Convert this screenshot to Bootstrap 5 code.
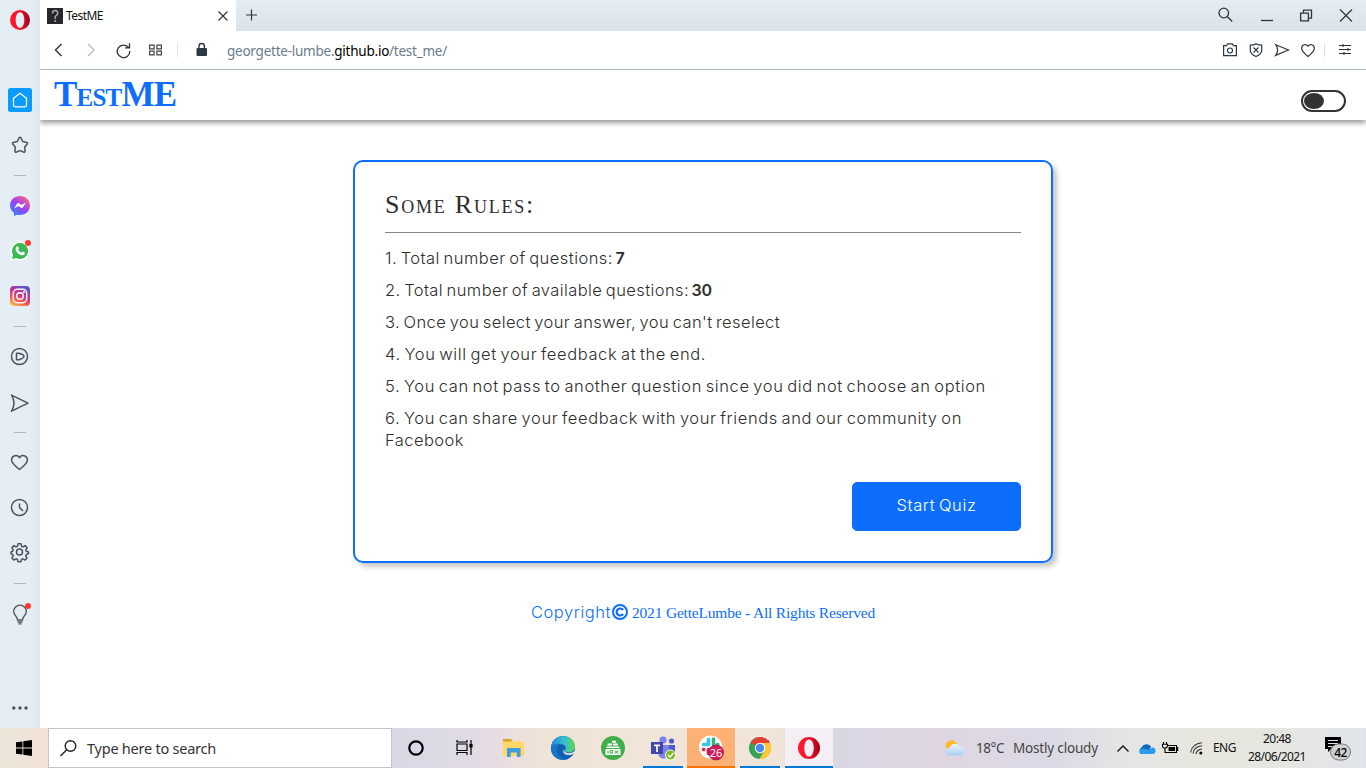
<!DOCTYPE html>
<html lang="en">
<head>
<meta charset="utf-8">
<title>TestME</title>
<link href="https://cdn.jsdelivr.net/npm/bootstrap@5.3.0/dist/css/bootstrap.min.css" rel="stylesheet">
<style>
body{width:1366px;height:768px;overflow:hidden;background:#fff;color:#2d2d2d;font-family:Inter,sans-serif;font-size:16px}
svg{display:block;fill:none;overflow:visible}
.t{display:inline-block;white-space:nowrap}
.side{width:40px;position:relative;z-index:2;background:linear-gradient(90deg,#e5edf5 75%,#dde6ee);color:#4a5560}
.side .it{height:45px;position:relative}
.side hr{width:12px;margin:7.5px auto;border-top:1px solid #a5b8c7;opacity:1}
.logo-cell{height:77.5px;padding-top:10px}
.reddot{position:absolute;left:25px;top:11px;width:6px;height:6px;border-radius:50%;background:#ff3b30}
.tabs-row{height:31px;background:linear-gradient(#e6eef5,#d9e1e9)}
.tab-on{width:196px;padding-left:7px;background:#fff;font:12px "Noto Sans",sans-serif;letter-spacing:-.54px;color:#111}
.addr{height:39px;border-bottom:1px solid #b4bec8;font:13.5px "Noto Sans",sans-serif;letter-spacing:-.24px;color:#6b7c8c}
.url{margin:2px 0 0 20px}
.site-head{height:50px;box-shadow:0 3px 5px rgba(0,0,0,.4);padding:0 20px 0 14px}
.brandname{font:bold 35px/50px "Liberation Serif",serif;font-variant:small-caps;letter-spacing:-.78px;color:#0d6efd}
.switchy{width:45px;height:22px;border:2px solid #333;border-radius:11px;padding:1px;margin-top:12px}
.switchy i{display:block;width:20px;height:16px;border-radius:50%;background:#333}
.rules{width:700px;height:403px;margin:40px 0 0 313px;border:2px solid #0d6efd;border-radius:10px;padding:25px 30px 30px;box-shadow:4px 4px 5px rgba(0,0,0,.22)}
.rules h1{font:26px/36px "Liberation Serif",serif;font-variant:small-caps;letter-spacing:1.77px;margin:0;height:46px;border-bottom:1px solid #888}
.rules ol,.startbtn,.copyr .cp{font-size:16.5px;word-spacing:-1.5px;font-weight:300}
.rules ol{list-style:none;margin:14px 0 0;padding:0;line-height:22px}
.rules li{margin-bottom:10px}
.rules li:nth-child(1){letter-spacing:.464px}
.rules li:nth-child(2){letter-spacing:.403px}
.rules li:nth-child(3){letter-spacing:.394px}
.rules li:nth-child(4){letter-spacing:.61px}
.rules li:nth-child(5){letter-spacing:.609px}
.rules li:nth-child(6){letter-spacing:.593px}
.rules li .last{letter-spacing:.45px}
.rules b{font-weight:600;font-size:16px;letter-spacing:-.3px;margin-left:2.5px}
.startbtn{width:169px;height:49px;border-radius:5px;letter-spacing:.62px;margin-top:21px;padding:4px 0 6px}
.copyr{margin:37px 0 0 491px;color:#0d6efd;line-height:24px}
.copyr .cp{letter-spacing:.54px}
.copyr .sf{font:15.5px/26px "Liberation Serif",serif;letter-spacing:-.193px}
.copyr svg{margin:4px 4px 0 1px}
.taskbar{height:40px;background:linear-gradient(90deg,#ece5d9 0,#f3e2d6 48px,#dad8e6 392px,#dedae6 460px,#e8dbe3 490px,#f0e3d8 540px,#f1e4d8 780px,#d9d6e4 840px,#dfd5e2 930px,#dcd9e6 1050px,#e5e5e4 1130px,#e7e7de 1210px,#e6e6e2 1290px,#dfe4ea 1366px);color:#111;font-family:"Noto Sans",sans-serif}
.find{width:344px;border:1px solid #c5c5c9;background:#fff;font-size:14.5px;letter-spacing:-.236px;color:#333}
.app{width:50px;border-bottom:2px solid transparent;padding-top:1px}
.app.sm{width:48px}
.app.tm{width:49px}
.app.run{background:linear-gradient(#0078d7,#0078d7) center bottom/40px 2px no-repeat border-box}
.app.sl{background:#fdb174;border-bottom-color:#f77400}
.app.op{background:#f3eff4;border-bottom-color:#0078d7}
.tray{width:421px;font-size:12px;letter-spacing:-.51px}
.weather{font-size:13.5px;color:#444;gap:9px;margin-left:11px;letter-spacing:-.18px}
.weather .deg{letter-spacing:-.44px}
.clock{margin:-1px 0 0 11px;line-height:18px;width:60px;letter-spacing:-.6px}
</style>
</head>
<body class="d-flex flex-column">
<div class="d-flex flex-grow-1">
<nav class="side d-flex flex-column flex-shrink-0">
  <div class="logo-cell d-flex justify-content-center"><svg width="20" height="20" viewBox="0 0 20 20"><defs><linearGradient id="og"><stop offset="0" stop-color="#ff1b2d"/><stop offset=".5" stop-color="#f0142b"/><stop offset="1" stop-color="#a00016"/></linearGradient></defs><path fill="url(#og)" fill-rule="evenodd" d="M10 0a10 10 0 100 20a10 10 0 100-20M10 2.200c2.700 0 4.300 3.500 4.300 7.800s-1.600 7.800-4.300 7.800s-4.300-3.500-4.300-7.800s1.600-7.800 4.300-7.800"/></svg></div>
  <div class="it d-flex align-items-center justify-content-center"><svg width="24" height="24"><rect width="24" height="24" rx="2.500" fill="#0a9bff"/><path stroke="#fff" stroke-width="1.300" stroke-linejoin="round" d="M12 5.200l6.500 5v6.600q0 2-2 2h-9q-2 0-2-2v-6.600z"/></svg></div>
  <div class="it d-flex align-items-center justify-content-center"><svg width="18" height="18" stroke="currentColor" stroke-width="1.500" stroke-linejoin="round"><path d="M8 2q1-1.500 2 0l1.700 3.500 4 .9q1.400.6.400 1.900l-2.400 2.800.4 4q-.2 1.400-1.600.9L9 14.600 5.500 16q-1.400.5-1.600-.9l.4-4L1.900 8.300q-1-1.300.4-1.900l4-.9z"/></svg></div>
  <hr>
  <div class="it d-flex align-items-center justify-content-center"><svg width="20" height="20"><defs><linearGradient id="mg" x1=".1" y1="1" x2=".9" y2="0"><stop offset="0" stop-color="#1595ff"/><stop offset=".5" stop-color="#a040f5"/><stop offset="1" stop-color="#ff6d70"/></linearGradient></defs><path fill="url(#mg)" d="M10 0c5.600 0 10 4.200 10 9.600s-4.400 9.500-10 9.500q-1.500 0-2.800-.4L4 20v-3Q0 14 0 9.600C0 4.200 4.400 0 10 0"/><path fill="#fff" d="M4 12.400l3.200-4.900q.8-1 1.900-.3l2.300 1.700 4.600-2.400-3.200 5q-.8 1-1.900.2l-2.300-1.700z"/></svg></div>
  <div class="it d-flex align-items-center justify-content-center"><svg width="20" height="20"><path fill="#fff" d="M0 20L1.500 14.500A9.500 9.500 0 1 1 5.500 18.500z"/><path fill="#3cb950" d="M2 18l1.100-4A8 8 0 1 1 6.200 17z"/><path fill="#fff" d="M6.700 5.500q1-.8 1.500.2l.7 1.600q.1.600-.8 1.500 1.200 2.200 3.300 3 1-1.400 1.500-1.200l1.700.9q.6.300 0 1.500-.8 1.500-2.800 1.200c-3.500-.7-6-3.700-6.200-6q0-1.700 1.100-2.700"/></svg><span class="reddot"></span></div>
  <div class="it d-flex align-items-center justify-content-center"><svg width="20" height="20"><defs><linearGradient id="ig" x1=".1" y1="1" x2=".6" y2="0"><stop offset="0" stop-color="#fdc855"/><stop offset=".35" stop-color="#f25b4d"/><stop offset=".65" stop-color="#d02c92"/><stop offset="1" stop-color="#5955d0"/></linearGradient></defs><rect width="20" height="20" rx="4" fill="url(#ig)"/><g stroke="#fff" stroke-width="1.500"><rect x="3.300" y="3.300" width="13.400" height="13.400" rx="4"/><circle cx="10" cy="10" r="3.300"/></g><circle cx="14" cy="6" r="1" fill="#fff"/></svg></div>
  <hr>
  <div class="it d-flex align-items-center justify-content-center"><svg width="18" height="18" stroke="currentColor" stroke-width="1.500" stroke-linejoin="round"><circle cx="8.500" cy="8.500" r="8"/><path d="M5.500 5.300h2.500q5 1.500 5 3.200t-5 3.200H5.500z"/></svg></div>
  <div class="it d-flex align-items-center justify-content-center pt-1"><svg width="18" height="18" stroke="currentColor" stroke-width="1.500" stroke-linejoin="round"><path d="M.5.200l16.500 8-16.500 8q5-8 0-16z"/></svg></div>
  <hr>
  <div class="it d-flex align-items-center justify-content-center"><svg width="18" height="18" stroke="currentColor" stroke-width="1.500"><path d="M8.500 15.500Q.5 9.300.5 5.700A4.400 4.400 0 0 1 8.500 3.500 4.400 4.400 0 0 1 16.500 5.700Q16.500 9.300 8.500 15.500z"/></svg></div>
  <div class="it d-flex align-items-center justify-content-center"><svg width="18" height="18" stroke="currentColor" stroke-width="1.500"><circle cx="8.500" cy="8.500" r="8"/><path d="M8.500 4.500v4l3.500 3.500"/></svg></div>
  <div class="it d-flex align-items-center justify-content-center"><svg width="18" height="18" viewBox="0.500 1 18 18" stroke="currentColor" stroke-width="1.500" stroke-linejoin="round"><circle cx="9" cy="9" r="3"/><path d="M7.500.8h3l.5 2.400 1.500.7 2.200-1.300 1.900 2.200-1.300 2 .5 1.500 2.200.7v1.800l-2.200.6-.6 1.500 1.300 2.100-2 2.100-2.100-1.300-1.400.6-.5 2.300h-3L7 16.400l-1.500-.6-2.100 1.300-2-2.100 1.300-2.100-.6-1.500-1.600-.6V9l1.600-.7.600-1.500-1.300-2 2-2.200 2.100 1.300L7 3.200z"/></svg></div>
  <hr>
  <div class="it d-flex align-items-center justify-content-center pt-1"><svg width="16" height="20" stroke="currentColor" stroke-width="1.300"><path d="M5.500 14q0-2-2-4.200a6.300 6.300 0 1 1 9 0q-2 2.200-2 4.200zM5.500 16h5M6.500 17.800h3"/></svg><span class="reddot"></span></div>
  <div class="mt-auto d-flex justify-content-center pb-3"><svg width="16" height="8"><circle cx="1.800" cy="4" r="1.700" fill="#4a5560"/><circle cx="8" cy="4" r="1.700" fill="#4a5560"/><circle cx="14" cy="4" r="1.700" fill="#4a5560"/></svg></div>
</nav>
<main class="flex-grow-1">
  <div class="tabs-row d-flex">
    <div class="tab-on d-flex align-items-center"><svg width="16" height="16"><rect width="16" height="16" fill="#26282c"/><path stroke="#aaa" stroke-width="1.500" d="M5.500 5.500q0-3 2.700-3t2.500 2.700q0 1.500-2.500 3.300v2.500"/><circle cx="8.200" cy="13" r="1" fill="#aaa"/></svg><span class="t" style="margin-left:3px">TestME</span><svg class="ms-auto me-2" width="10" height="10" stroke="#333" stroke-width="1.200"><path d="M.5.500l9 9M9.500.500l-9 9"/></svg></div>
    <svg class="align-self-center ms-2 ps-1" width="15" height="11" stroke="#333" stroke-width="1.200"><path d="M3.500-.5v11M-2 5h11"/></svg>
    <div class="ms-auto d-flex align-items-center" style="padding-right:14px;gap:28px">
      <svg width="15" height="15" stroke="#333" stroke-width="1.300"><circle cx="5.800" cy="5" r="4.800"/><path d="M9.200 8.500l5 5"/></svg>
      <svg width="11" height="12" stroke="#333" stroke-width="1.300"><path d="M0 10.500h12"/></svg>
      <svg width="12" height="12" stroke="#333" stroke-width="1.300"><path d="M.6 3.100h7.800v7.800H.6zM3.500 3V.1h8v8h-3"/></svg>
      <svg width="12" height="12" stroke="#333" stroke-width="1.200"><path d="M0-.5l12 12M12-.5L0 11.500"/></svg>
    </div>
  </div>
  <div class="addr d-flex align-items-center">
    <svg width="70" height="16" style="margin-left:14px" stroke-width="1.400"><path stroke="#333" d="M7.500 2l-6 6 6 6"/><path stroke="#bbb" d="M34 2l6 6-6 6"/></svg>
    <svg style="margin-left:-8px" width="14" height="14" stroke="#333" stroke-width="1.300"><path d="M12.500 4.500A6.300 6.300 0 1 0 13.800 8M13.500.3v4.500H9"/></svg>
    <svg style="margin-left:19px" width="13" height="11" stroke="#444" stroke-width="1.200"><path d="M.6.100h4.500v3.700H.6zM7.900.1h4.500v3.700H7.900zM.6 6.200h4.500v3.700H.6zM7.900 6.200h4.500v3.700H7.900z"/></svg>
    <span class="border-start" style="height:14px;margin-left:15px"></span>
    <svg style="margin-left:18px" width="11" height="14"><rect x=".5" y="5" width="10.500" height="8" rx="1" fill="#2c3944"/><path d="M3 6V3.200a2.700 2.700 0 0 1 5.400 0V6" stroke="#2c3944" stroke-width="1.400"/></svg>
    <span class="t url">georgette-lumbe.<span class="text-black">github.io</span>/test_me/</span>
    <div class="ms-auto d-flex align-items-center" style="padding-right:15px;gap:12px">
      <svg width="15" height="14" stroke="#2c3944" stroke-width="1.200"><path d="M.6 2.600h3l1-1.800h4.800l1 1.800h3v10H.6z"/><circle cx="7" cy="7.500" r="2.500"/></svg>
      <svg width="13" height="14" stroke="#2c3944" stroke-width="1.200"><path d="M6 .7q2.500 1.500 5.700 1.500v5.300q0 3.500-5.700 6-5.700-2.500-5.700-6V2.200Q4 2.200 6 .7zM3.500 4.500l5 5M8.500 4.500l-5 5"/></svg>
      <svg width="14" height="12" stroke="#2c3944" stroke-width="1.200"><path d="M.7.700L13.500 6 .7 11.300Q4.500 6 .7.700z"/></svg>
      <svg width="14" height="14" stroke="#2c3944" stroke-width="1.200"><path d="M7 13.500Q.6 8.500.6 5A3.500 3.500 0 0 1 7 3.200 3.500 3.500 0 0 1 13.400 5Q13.400 8.500 7 13.500z"/></svg>
      <span class="border-start" style="height:14px;margin:0 2px 0 -3px"></span>
      <svg width="12" height="12" stroke="#333" stroke-width="1.100"><path d="M0 1.500h12M0 5.500h12M0 9.500h12M4 0v3M9 4v3M5 8v3"/></svg>
    </div>
  </div>
  <header class="site-head d-flex align-items-center justify-content-between"><span class="brandname t">TestME</span><div class="switchy"><i></i></div></header>
  <section class="rules d-flex flex-column">
    <h1>Some Rules:</h1>
    <ol>
      <li><span class="t">1. Total number of questions:</span><b class="t">7</b></li>
      <li><span class="t">2. Total number of available questions:</span><b class="t">30</b></li>
      <li><span class="t">3. Once you select your answer, you can't reselect</span></li>
      <li><span class="t">4. You will get your feedback at the end.</span></li>
      <li><span class="t">5. You can not pass to another question since you did not choose an option</span></li>
      <li><span class="t">6. You can share your feedback with your friends and our community on</span><br><span class="t last">Facebook</span></li>
    </ol>
    <button class="btn btn-primary startbtn align-self-end">Start Quiz</button>
  </section>
  <footer class="copyr d-flex"><span class="t cp">Copyright</span><svg width="16" height="16" stroke="#0d6efd" stroke-width="2"><circle cx="8" cy="8" r="7"/><path stroke-width="2.200" d="M11 6a3.500 3.500 0 1 0 0 4"/></svg><span class="sf t">2021 GetteLumbe - All Rights Reserved</span></footer>
</main>
</div>
<div class="taskbar d-flex flex-shrink-0">
  <div class="d-flex align-items-center" style="width:48px;padding-left:16px"><svg width="16" height="16"><path fill="#000" d="M0 2.300l6.500-.9v6.200H0zM7.300 1.300L16 0v7.600H7.300zM0 8.400h6.500v6.200L0 13.700zM7.300 8.400H16V16l-8.700-1.300z"/></svg></div>
  <div class="find d-flex align-items-center"><svg style="margin-left:11px" width="17" height="17" stroke="#222" stroke-width="1.400"><circle cx="10.500" cy="6" r="5.300"/><path d="M6.500 10L.5 16"/></svg><span class="t" style="margin:1px 0 0 10px">Type here to search</span></div>
  <div class="app sm d-flex align-items-center justify-content-center"><svg width="16" height="16" stroke="#000" stroke-width="2.200"><circle cx="8" cy="8" r="6.700"/></svg></div>
  <div class="app sm d-flex align-items-center justify-content-center"><svg width="17" height="15" stroke="#000" stroke-width="1.200"><path d="M1 4h10v6.500H1zM1 0v2h10V0M1 15v-2.500h10V15M15 0v15"/><path fill="#000" d="M14 4.500h2v2.500h-2z"/></svg></div>
  <div class="app d-flex align-items-center justify-content-center"><svg width="21" height="18"><path fill="#d9a521" d="M0 0h8l2 3H0z"/><path fill="#ffd866" d="M0 2.500h21V17H0z"/><path fill="#3f9ce0" d="M4 9h13.500v9h-3.700v-4.500H7.700V18H4z"/></svg></div>
  <div class="app d-flex align-items-center justify-content-center"><svg width="24" height="24"><defs><linearGradient id="eg"><stop offset="0" stop-color="#2389d8"/><stop offset=".55" stop-color="#31bfd2"/><stop offset="1" stop-color="#62d650"/></linearGradient></defs><circle cx="12" cy="12" r="12" fill="#0f5fb4"/><path fill="url(#eg)" d="M.1 11C1 4 6 0 12 0c7 0 12 5 12 10.500 0 4-3 6-6.500 6-3 0-4-1.300-3.500-2.200 2-2.500.3-6.300-5-6.300C4.500 8 1 9 .1 11"/><path fill="#1677c9" d="M0 11.500C1 8.500 5 7 9 8c-3 2-4 5-2.500 9 1 3 4 5.500 8 6.600Q11 24.500 7 22.800C2.500 20.800-.3 17 0 11.500"/><path fill="#f1e4d8" d="M13.500 13c-.8 1.500 0 4.200 4 4.200q3.500 0 6.500-2.200v3l-1.300-.6q-2.200 1.600-5.200 1.600-4-.2-5.200-3Q12 14.200 13.500 13"/></svg></div>
  <div class="app d-flex align-items-center justify-content-center"><svg width="24" height="24"><circle cx="12" cy="12" r="12" fill="#3fae49"/><g fill="#fff"><path d="M6.500 7.500h4.500v2H6.500zM12 7.500h5v2h-5zM11 4.700h4v2h-4zM5.500 10.500h13V12h-13zM4.500 13h15v6h-15z"/></g><path stroke="#3fae49" d="M7 14.500v3M9 14.500h2.500v2.600H9zM13.500 14.500l4 3M17.500 14.500l-4 3"/></svg></div>
  <div class="app tm run d-flex align-items-center justify-content-center"><svg width="24" height="24"><circle cx="12" cy="4" r="3.600" fill="#7b83eb"/><circle cx="20.500" cy="5" r="2.600" fill="#5059c9"/><path fill="#5059c9" d="M16 9h8v7a4 4 0 0 1-8 1z"/><path fill="#7b83eb" d="M7 9h11v8a5.500 5.500 0 0 1-11 0z"/><path fill="#4048a8" d="M0 6h12v12H0z"/><path stroke="#fff" stroke-width="1.700" d="M3 9.300h6M6 9.300V16"/><circle cx="19.500" cy="19" r="5" fill="#76b81e" stroke="#fff"/><path stroke="#fff" stroke-width="1.600" d="M17 19l2 2 3.500-4"/></svg></div>
  <div class="app sm sl d-flex align-items-center justify-content-center"><svg width="26" height="26"><circle cx="12.500" cy="12" r="11.500" fill="#fff"/><g stroke-width="3.600" stroke-linecap="round"><path stroke="#36c5f0" d="M10.500 4.500v5M5.500 9.500h4"/><path stroke="#2eb67d" d="M15.500 4v6M19.500 9.500h.3"/><path stroke="#e01e5a" d="M5.500 14.500h.3M10.500 14.500v4"/></g><circle cx="18" cy="17.500" r="7.500" fill="#d51b5c" stroke="#8c1640" stroke-width=".8"/><text x="18" y="21.500" text-anchor="middle" fill="#fff" font-family="Noto Sans" font-size="11">26</text></svg></div>
  <div class="app run d-flex align-items-center justify-content-center"><svg width="22" height="22"><circle cx="11" cy="11" r="11" fill="#34a353"/><path fill="#e24133" d="M11 11L1.500 5.500a11 11 0 0 1 19 0z"/><path fill="#fdc93a" d="M11 11V5.800h9.800A11 11 0 0 1 10.500 22l5-8.500z"/><path fill="#e24133" d="M11 5.900V3h8.600l1.200 2.900z"/><circle cx="11" cy="11" r="5.200" fill="#fff"/><circle cx="11" cy="11" r="4.200" fill="#4a86ee"/></svg></div>
  <div class="app sm op d-flex align-items-center justify-content-center"><svg width="22" height="22" viewBox="0 0 20 20"><path fill="url(#og)" fill-rule="evenodd" d="M10 0a10 10 0 100 20a10 10 0 100-20M10 2.200c2.700 0 4.300 3.500 4.300 7.800s-1.600 7.800-4.300 7.800s-4.300-3.500-4.300-7.800s1.600-7.800 4.300-7.800"/></svg></div>
  <div class="tray d-flex align-items-center ms-auto">
    <svg width="20" height="16"><defs><linearGradient id="cg" x2="0" y2="1"><stop offset="0" stop-color="#eef6fd"/><stop offset="1" stop-color="#a9cdf0"/></linearGradient></defs><circle cx="6.500" cy="6" r="5.800" fill="#fdb924"/><path fill="url(#cg)" d="M4.500 15.500a3.900 3.900 0 0 1 .3-7.800 5.200 5.200 0 0 1 9.700-1 4.500 4.500 0 0 1 1.500 8.800z"/></svg>
    <div class="weather d-flex"><span class="t deg">18°C</span><span class="t">Mostly cloudy</span></div>
    <svg style="margin-left:19px" width="12" height="7" stroke="#111" stroke-width="1.300"><path d="M.5 6.500L6 1l5.500 5.500"/></svg>
    <svg style="margin-left:10px" width="17" height="11"><path fill="#0f6cc4" d="M2 10.500a3.500 3.500 0 0 1 .5-6A5.500 5.500 0 0 1 12 3.500L9 10.500z"/><path fill="#2b9ceb" d="M1.500 11a2.800 2.800 0 0 1 .5-5q4-1 8 1l3-2.500a3.200 3.200 0 0 1 .5 6.500z"/></svg>
    <svg style="margin-left:6px" width="16" height="13" stroke="#000" stroke-width="1.100"><path d="M6 3.500h8.500v7H5M14.500 5.500h1.200v3h-1.200M1.500 0v2M4.500 0v2M.5 2.300h5v1.500q0 2-2.500 2.200T.5 3.800zM3 6v4.500h2"/><path fill="#000" stroke="none" d="M6.500 5h6.500v4H6.500z"/></svg>
    <svg style="margin-left:12px" width="13" height="13" stroke="#333" stroke-width="1.100"><path d="M.5 10.500Q2 2 12 .8M3 11.500Q4 4.500 12 3.800M5.800 12Q7 7.500 12 7"/><circle cx="10.800" cy="11" r="1.500" fill="#000" stroke="none"/></svg>
    <span style="margin-left:10px" class="t">ENG</span>
    <div class="clock text-center"><span class="t">20:48</span><br><span class="t">28/06/2021</span></div>
    <svg style="margin-left:18px" width="28" height="26"><path fill="#000" d="M0 2h16v12H6l-3 3v-3H0z"/><path stroke="#dfe2e4" d="M3 5.500h10M3 8.500h10M3 11.500h5"/><rect x="5.500" y="9" width="20" height="16" rx="8" fill="#cfd0d2" stroke="#777"/><text x="15.500" y="21.500" text-anchor="middle" fill="#000" font-family="Noto Sans" font-size="12" font-weight="500">42</text></svg>
    <span class="border-start border-secondary-subtle ms-auto me-1 h-100"></span>
  </div>
</div>
<script src="https://cdn.jsdelivr.net/npm/bootstrap@5.3.0/dist/js/bootstrap.bundle.min.js"></script>
</body>
</html>
